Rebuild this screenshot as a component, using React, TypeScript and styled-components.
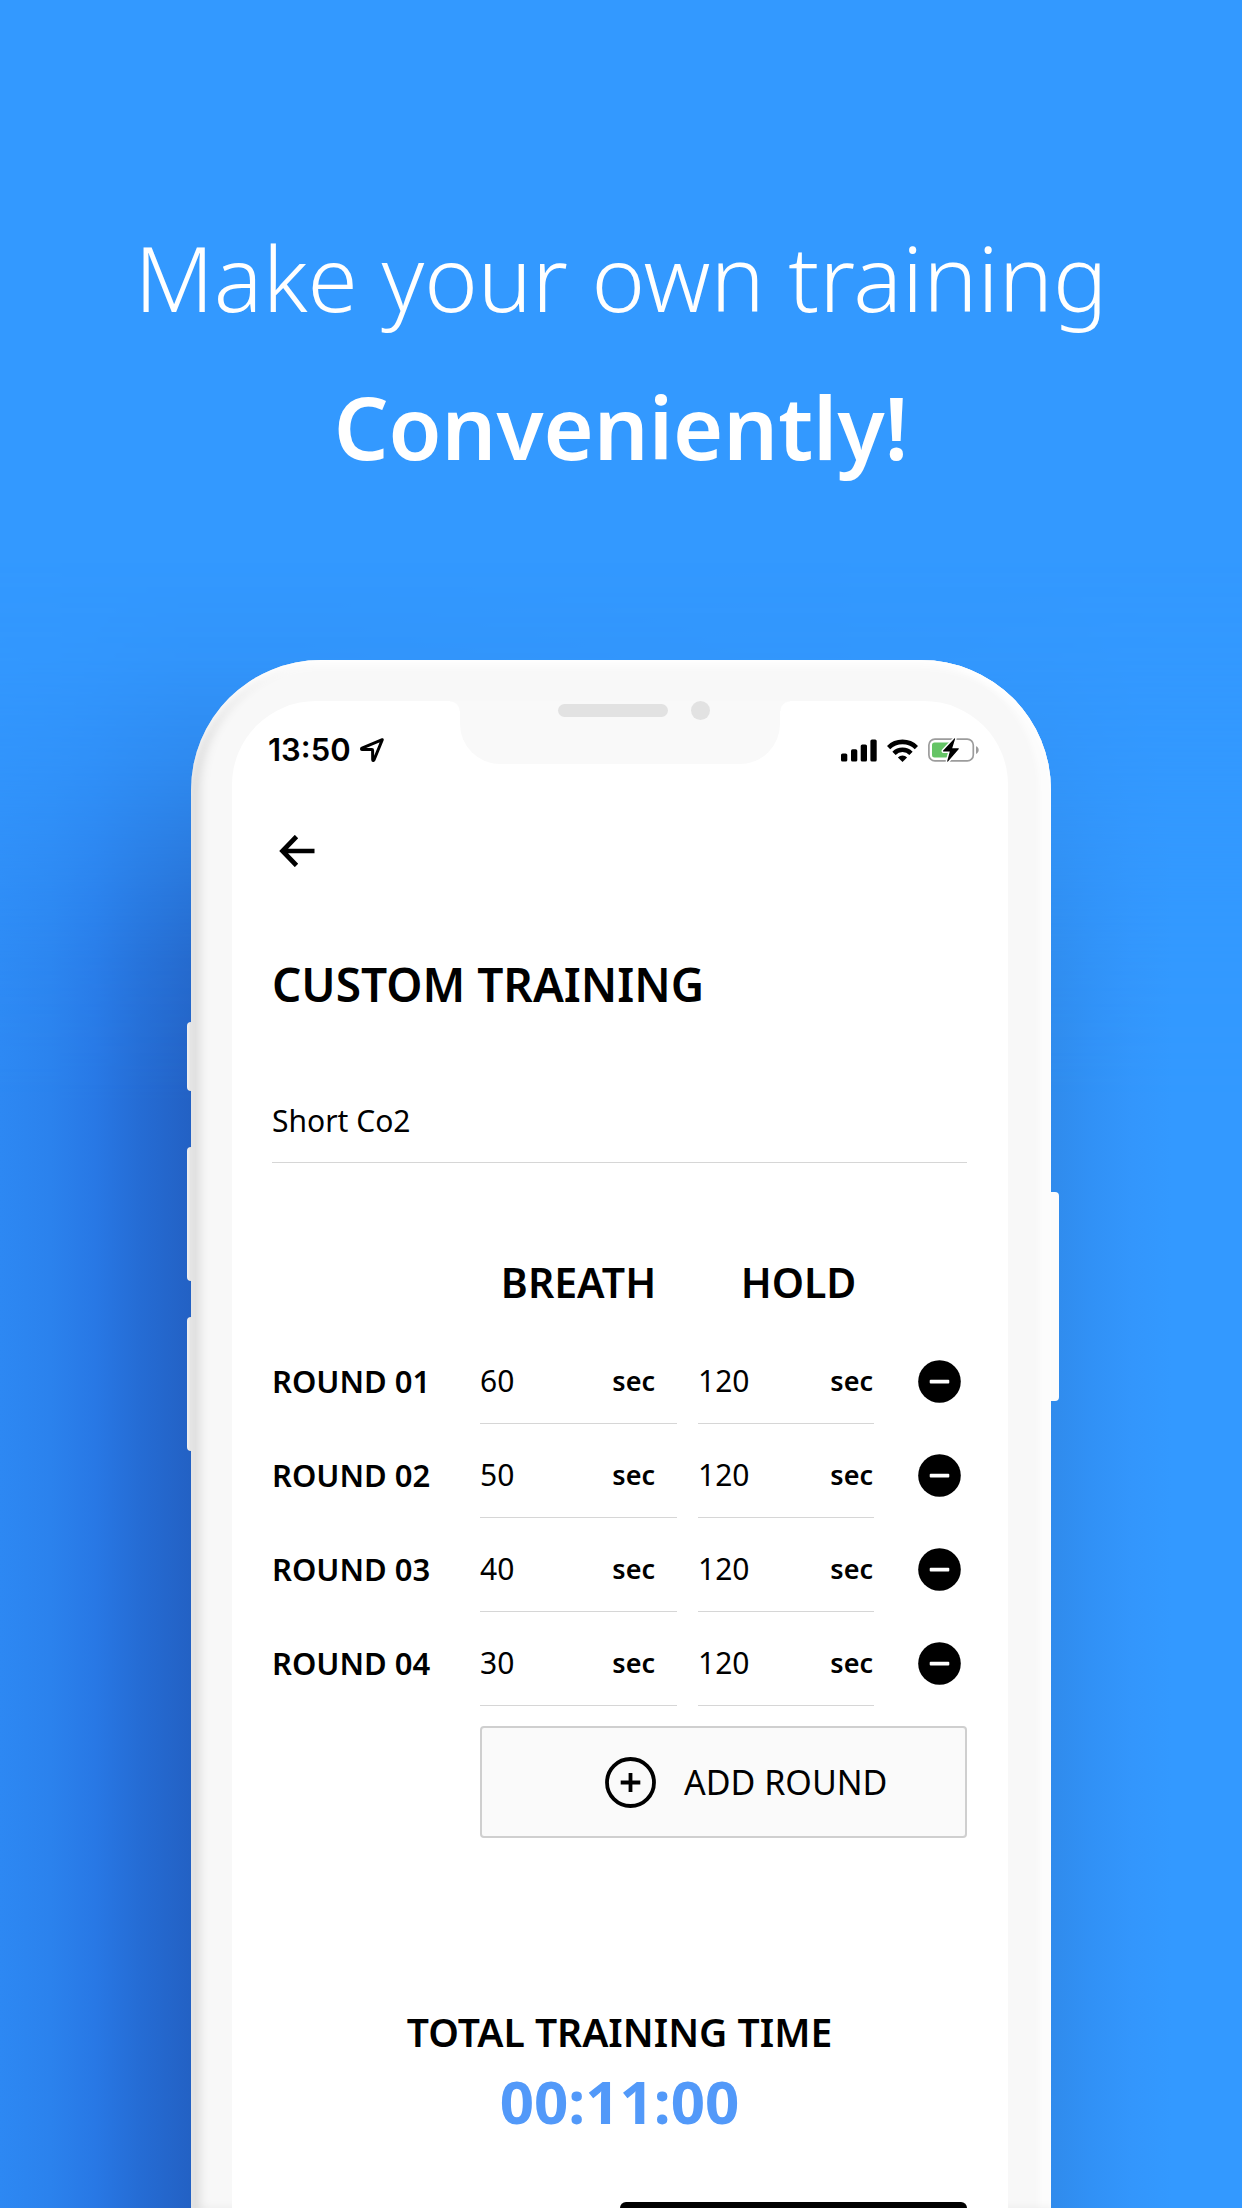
import React, { useState } from "react";
import styled, { createGlobalStyle } from "styled-components";

const GlobalStyle = createGlobalStyle`
  *, *::before, *::after { box-sizing: border-box; }
  body { margin: 0; background: #3399ff; }
  button, input { font: inherit; color: inherit; border: 0; padding: 0; margin: 0; background: none; }
  button { cursor: pointer; }
`;

const Page = styled.main`
  display: flex;
  flex-direction: column;
  height: 100vh;
  overflow: hidden;
  background: #3399ff;
  color: #000;
  font-family: "Noto Sans", "Open Sans", sans-serif;
`;

const Headline = styled.h1`
  margin: 0;
  padding: 202px 0 158px;
  color: #fff;
  text-align: center;
  font-size: 91px;
  font-weight: 300;
  line-height: 150px;
`;

const HeadlineStrong = styled.strong`
  display: block;
  font-size: 86px;
  font-weight: 600;
`;

const Device = styled.section`
  position: relative;
  display: grid;
  grid-template-columns: 191px 1fr 191px;
  flex: 1;
  min-height: 0;

  /* soft shade that the phone casts on the backdrop */
  &::before {
    content: "";
    position: absolute;
    inset: -100px 0 0;
    background: linear-gradient(
      90deg,
      #2d88f3 0,
      #2b82ed 50px,
      #2878e5 95px,
      #256cd4 140px,
      #2361c4 191px,
      #2361c4 300px,
      #308bec calc(100% - 191px),
      #3191f6 calc(100% - 150px),
      #3396fc calc(100% - 110px),
      #3399ff calc(100% - 70px)
    );
    mask-image: linear-gradient(
      180deg,
      transparent 0,
      rgba(0, 0, 0, 0.08) 100px,
      rgba(0, 0, 0, 0.26) 200px,
      rgba(0, 0, 0, 0.55) 300px,
      rgba(0, 0, 0, 0.83) 400px,
      #000 540px
    );
  }
`;

const Rail = styled.div<{ $side: "left" | "right" }>`
  position: relative;
  z-index: 1;
  display: flex;
  flex-direction: column;
  align-items: ${(p) => (p.$side === "left" ? "flex-end" : "flex-start")};
`;

const SideKey = styled.span<{ $side: "left" | "right"; $height: number; $gap: number }>`
  width: ${(p) => (p.$side === "left" ? 4 : 8)}px;
  height: ${(p) => p.$height}px;
  margin-top: ${(p) => p.$gap}px;
  border-radius: ${(p) => (p.$side === "left" ? "4px 0 0 4px" : "0 4px 4px 0")};
  background: ${(p) => (p.$side === "left" ? "linear-gradient(90deg, #f2f2f2, #e2e2e2)" : "#fcfcfc")};
`;

const Shell = styled.div`
  position: relative;
  display: flex;
  min-height: 0;
  padding: 41px 43px 0 41px;
  border-radius: 130px 130px 0 0;
  background: #f8f8f8;
  box-shadow:
    inset 0 8px 8px -2px #fff,
    inset 12px 0 12px -4px rgba(0, 0, 0, 0.13),
    inset -14px 0 4px -2px #fcfcfc;
`;

const Screen = styled.div`
  position: relative;
  flex: 1;
  min-width: 0;
  padding-top: 29px;
  border-radius: 84px 84px 0 0;
  background: #fff;
  overflow: hidden;
`;

const Notch = styled.div`
  position: absolute;
  top: 0;
  left: 50%;
  display: flex;
  align-items: flex-start;
  width: 320px;
  height: 63px;
  margin-left: -160px;
  padding-left: 98px;
  border-radius: 0 0 40px 40px;
  background: #f9f9f9;

  &::before,
  &::after {
    content: "";
    position: absolute;
    top: 0;
    width: 10px;
    height: 10px;
  }
  &::before {
    right: 100%;
    background: radial-gradient(circle at 0 100%, transparent 9px, #f9f9f9 10px);
  }
  &::after {
    left: 100%;
    background: radial-gradient(circle at 100% 100%, transparent 9px, #f9f9f9 10px);
  }
`;

const Sensors = styled.div`
  display: flex;
  align-items: center;
  gap: 23px;
`;

const Speaker = styled.span`
  width: 110px;
  height: 13px;
  border-radius: 7px;
  background: #e2e2e2;
`;

const Camera = styled.span`
  width: 19px;
  height: 19px;
  border-radius: 50%;
  background: #e2e2e2;
`;

const StatusBar = styled.div`
  display: flex;
  align-items: center;
  justify-content: space-between;
  height: 40px;
  padding: 0 29px 0 36px;
`;

const StatusGroup = styled.div<{ $gap: number }>`
  display: flex;
  align-items: center;
  gap: ${(p) => p.$gap}px;
`;

const Clock = styled.time`
  font-family: Inter, sans-serif;
  font-size: 31px;
  font-weight: 600;
  line-height: 40px;
`;

const Content = styled.form`
  display: flex;
  flex-direction: column;
  padding: 56px 41px 0 40px;
`;

const BackButton = styled.button`
  display: flex;
  align-items: center;
  justify-content: center;
  width: 50px;
  height: 50px;
`;

const Title = styled.h2`
  margin: 76px 0 63px;
  font-size: 46px;
  font-weight: 600;
  line-height: 64px;
`;

const NameInput = styled.input`
  width: 100%;
  height: 84px;
  border-bottom: 1px solid #d6d6d6;
  border-radius: 0;
  font-size: 30px;
  outline: none;
`;

const Rounds = styled.table`
  display: block;
  margin-top: 91px;

  thead, tbody { display: block; }
`;

const HeadRow = styled.tr`
  display: grid;
  grid-template-columns: 187px 197fr 201fr 47px;
  column-gap: 21px;
  margin-bottom: 28px;
`;

const HeadCell = styled.th`
  padding: 0;
  font-size: 41px;
  font-weight: 600;
  line-height: 56px;
  text-align: center;
`;

const RoundRow = styled.tr`
  display: grid;
  grid-template-columns: 187px 197fr 176fr 72px;
  column-gap: 21px;
  height: 86px;
  margin-top: 8px;
`;

const RoundName = styled.th`
  padding: 0;
  font-size: 31px;
  font-weight: 600;
  line-height: 86px;
  text-align: left;
  white-space: nowrap;
`;

const Cell = styled.td`
  min-width: 0;
  padding: 0;
`;

const SecondsField = styled.label<{ $inset: number }>`
  display: flex;
  align-items: center;
  height: 86px;
  padding-right: ${(p) => p.$inset}px;
  border-bottom: 1px solid #d6d6d6;
`;

const SecondsInput = styled.input`
  flex: 1;
  width: 0;
  min-width: 0;
  height: 85px;
  font-size: 30px;
  outline: none;
`;

const Unit = styled.span`
  font-size: 27px;
  font-weight: 600;
`;

const RemoveCell = styled(Cell)`
  display: flex;
  align-items: center;
  justify-content: flex-end;
  padding-right: 6px;
`;

const RemoveButton = styled.button`
  display: flex;
  border-radius: 50%;
`;

const AddButton = styled.button`
  display: flex;
  align-items: center;
  gap: 28px;
  height: 112px;
  margin: 20px 0 0 208px;
  padding-left: 123px;
  border: 2px solid #cfcfcf;
  border-radius: 4px;
  background: #fafafa;
  font-size: 34px;
  white-space: nowrap;
`;

const Total = styled.div`
  margin-top: 166px;
  text-align: center;
`;

const TotalLabel = styled.h3`
  margin: 0 0 5px;
  font-size: 39px;
  font-weight: 600;
  line-height: 56px;
`;

const TotalTime = styled.output`
  display: block;
  color: #5299f9;
  font-size: 60px;
  font-weight: 700;
  line-height: 72px;
`;

const SaveButton = styled.button`
  align-self: flex-end;
  width: 50%;
  height: 112px;
  margin-top: 65px;
  border-radius: 6px;
  background: #000;
`;

const LocationIcon = () => (
  <svg width="26" height="26" viewBox="0 0 26 26" aria-hidden="true">
    <path
      d="M23.3 2.7 3 11.2c-.9.4-.6 1.3.3 1.3l9.6.1c.5 0 .7.2.7.7l.1 9.4c0 .9.9 1.2 1.3.3z"
      fill="none"
      stroke="#000"
      strokeWidth="3"
      strokeLinejoin="round"
    />
  </svg>
);

const SignalIcon = () => (
  <svg width="36" height="23" viewBox="0 0 36 23" aria-hidden="true">
    <rect x="0" y="14.5" width="6.3" height="8" rx="1.6" />
    <rect x="10" y="10.3" width="6.3" height="12.2" rx="1.6" />
    <rect x="19.7" y="5.5" width="6.3" height="17" rx="1.6" />
    <rect x="29.4" y="0.5" width="6.3" height="22" rx="1.6" />
  </svg>
);

const WifiIcon = () => (
  <svg width="31" height="23" viewBox="0 0 31 23" aria-hidden="true">
    <g fill="none" stroke="#000" strokeWidth="4.6">
      <path d="M1.6 8.6a19.8 19.8 0 0 1 27.8 0" />
      <path d="M7 14.3a12 12 0 0 1 17 0" />
    </g>
    <path d="M15.5 23l-4.6-4.6a6.6 6.6 0 0 1 9.2 0z" />
  </svg>
);

const BatteryIcon = () => (
  <svg width="51" height="26" viewBox="0 0 51 26" aria-hidden="true">
    <rect x="0.9" y="2.1" width="44.4" height="21.8" rx="6" fill="none" stroke="#9c9c9c" strokeWidth="1.7" />
    <path d="M48 9.3c1.8.6 2.7 2 2.7 3.8s-.9 3.2-2.7 3.8z" fill="#9c9c9c" />
    <path d="M6.5 5.500h16v15h-16a2.5 2.5 0 0 1-2.5-2.5v-10a2.5 2.5 0 0 1 2.5-2.5z" fill="#65c466" />
    <path
      d="M26.4 1.4 15.2 13.5c-.4.5-.2 1 .4 1h6.2l-2.6 9.6c-.1.8.4.9.8.5l10.6-12.4c.4-.5.2-1-.4-1h-6l2.9-9.3c.2-.8-.3-.9-.7-.5z"
      stroke="#fff"
      strokeWidth="3"
      paintOrder="stroke"
    />
  </svg>
);

const BackIcon = () => (
  <svg width="36" height="32" viewBox="0 0 36 32" aria-hidden="true">
    <path d="M17.5 1.5 3.5 16l14 14.5M4 16h31.5" fill="none" stroke="#000" strokeWidth="4.7" />
  </svg>
);

const MinusIcon = () => (
  <svg width="43" height="43" viewBox="0 0 43 43" aria-hidden="true">
    <circle cx="21.5" cy="21.5" r="21.3" />
    <rect x="11.7" y="19.7" width="19.6" height="3.8" rx="1" fill="#fff" />
  </svg>
);

const PlusIcon = () => (
  <svg width="51" height="51" viewBox="0 0 51 51" aria-hidden="true">
    <circle cx="25.5" cy="25.5" r="23.5" fill="none" stroke="#000" strokeWidth="3.8" />
    <path d="M15.7 25.5h19.6M25.5 15.9v19.2" stroke="#000" strokeWidth="3.8" />
  </svg>
);

type Round = { breath: string; hold: string };

const initialRounds: Round[] = [
  { breath: "60", hold: "120" },
  { breath: "50", hold: "120" },
  { breath: "40", hold: "120" },
  { breath: "30", hold: "120" },
];

const formatTime = (seconds: number) =>
  [Math.floor(seconds / 3600), Math.floor(seconds / 60) % 60, seconds % 60]
    .map((part) => String(part).padStart(2, "0"))
    .join(":");

export default function App() {
  const [name, setName] = useState("Short Co2");
  const [rounds, setRounds] = useState(initialRounds);

  const update = (index: number, key: keyof Round, value: string) =>
    setRounds(rounds.map((round, i) => (i === index ? { ...round, [key]: value } : round)));

  const total = rounds.reduce((sum, r) => sum + (Number(r.breath) || 0) + (Number(r.hold) || 0), 0);

  return (
    <>
      <GlobalStyle />
      <Page>
        <Headline>
          Make your own training
          <HeadlineStrong>Conveniently!</HeadlineStrong>
        </Headline>
        <Device>
          <Rail $side="left">
            <SideKey $side="left" $gap={362} $height={69} />
            <SideKey $side="left" $gap={56} $height={134} />
            <SideKey $side="left" $gap={36} $height={134} />
          </Rail>
          <Shell>
            <Screen>
              <Notch>
                <Sensors>
                  <Speaker />
                  <Camera />
                </Sensors>
              </Notch>
              <StatusBar>
                <StatusGroup $gap={8}>
                  <Clock>13:50</Clock>
                  <LocationIcon />
                </StatusGroup>
                <StatusGroup $gap={10}>
                  <SignalIcon />
                  <WifiIcon />
                  <BatteryIcon />
                </StatusGroup>
              </StatusBar>
              <Content onSubmit={(e) => e.preventDefault()}>
                <BackButton type="button" aria-label="Back">
                  <BackIcon />
                </BackButton>
                <Title>CUSTOM TRAINING</Title>
                <NameInput aria-label="Training name" value={name} onChange={(e) => setName(e.target.value)} />
                <Rounds>
                  <thead>
                    <HeadRow>
                      <Cell />
                      <HeadCell scope="col">BREATH</HeadCell>
                      <HeadCell scope="col">HOLD</HeadCell>
                      <Cell />
                    </HeadRow>
                  </thead>
                  <tbody>
                    {rounds.map((round, i) => {
                      const label = `ROUND ${String(i + 1).padStart(2, "0")}`;
                      return (
                        <RoundRow key={i}>
                          <RoundName scope="row">{label}</RoundName>
                          <Cell>
                            <SecondsField $inset={22}>
                              <SecondsInput
                                aria-label={`${label} breath seconds`}
                                inputMode="numeric"
                                value={round.breath}
                                onChange={(e) => update(i, "breath", e.target.value)}
                              />
                              <Unit>sec</Unit>
                            </SecondsField>
                          </Cell>
                          <Cell>
                            <SecondsField $inset={1}>
                              <SecondsInput
                                aria-label={`${label} hold seconds`}
                                inputMode="numeric"
                                value={round.hold}
                                onChange={(e) => update(i, "hold", e.target.value)}
                              />
                              <Unit>sec</Unit>
                            </SecondsField>
                          </Cell>
                          <RemoveCell>
                            <RemoveButton
                              type="button"
                              aria-label={`Remove ${label}`}
                              onClick={() => setRounds(rounds.filter((_, j) => j !== i))}
                            >
                              <MinusIcon />
                            </RemoveButton>
                          </RemoveCell>
                        </RoundRow>
                      );
                    })}
                  </tbody>
                </Rounds>
                <AddButton type="button" onClick={() => setRounds([...rounds, { breath: "30", hold: "120" }])}>
                  <PlusIcon />
                  ADD ROUND
                </AddButton>
                <Total>
                  <TotalLabel>TOTAL TRAINING TIME</TotalLabel>
                  <TotalTime>{formatTime(total)}</TotalTime>
                </Total>
                <SaveButton type="submit" aria-label="Save" />
              </Content>
            </Screen>
          </Shell>
          <Rail $side="right">
            <SideKey $side="right" $gap={532} $height={209} />
          </Rail>
        </Device>
      </Page>
    </>
  );
}
